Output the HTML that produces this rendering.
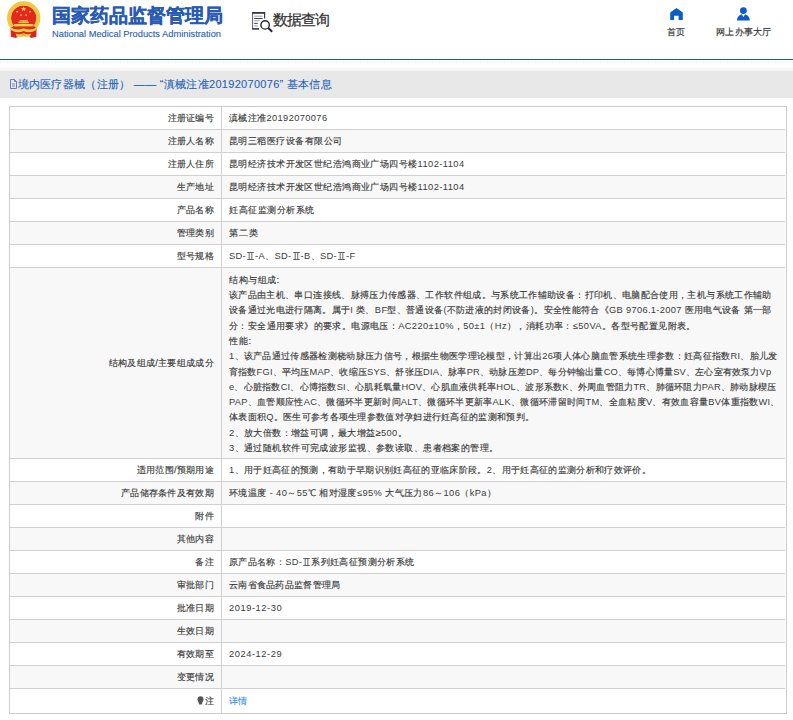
<!DOCTYPE html>
<html><head><meta charset="utf-8">
<style>
html,body{margin:0;padding:0;background:#fff;}
body{width:793px;height:720px;position:relative;overflow:hidden;font-family:"Liberation Sans",sans-serif;color:#444;}
.a{position:absolute;white-space:nowrap;}
#title{left:52px;top:4px;font-size:19px;font-weight:bold;color:#2a5bb3;line-height:24px;-webkit-text-stroke:0.3px #2a5bb3;}
#en{left:52px;top:28.5px;font-size:9.3px;color:#2c5fb4;line-height:11px;-webkit-text-stroke:0.12px #2c5fb4;}
#sq{left:272.5px;top:9.5px;font-size:15px;letter-spacing:-1px;color:#333;line-height:20px;-webkit-text-stroke:0.25px #333;}
.nav{font-size:9.3px;letter-spacing:.3px;color:#333;line-height:12px;-webkit-text-stroke:0.15px #333;}
#bl{left:0;top:59px;width:793px;height:1px;background:#0a5cbf;}
#grad{left:0;top:64px;width:793px;height:7px;background:linear-gradient(#fff 30%,#f2f2f2);}
#band{left:0;top:71px;width:793px;height:27px;background:#e8e8e8;}
#sub{left:10px;top:77px;font-size:11px;letter-spacing:.3px;color:#2462bd;line-height:15px;-webkit-text-stroke:0.1px #2462bd;}
.ln{left:10px;width:775px;height:1px;background:#d1cfd0;}
.t{font-size:9.3px;letter-spacing:0.3px;line-height:15px;color:#3a3a3a;-webkit-text-stroke:0.15px #3a3a3a;}
.lab{right:579px;text-align:right;}
.val{left:229px;}
.lat{-webkit-text-stroke:0;}
.link{color:#3a8ef2;-webkit-text-stroke:0.15px #3a8ef2;}
.big{left:229px;}
.big div{height:15.3px;line-height:15px;}
.bulb{display:inline-block;width:6px;height:8px;background:#555;border-radius:3px 3px 2px 2px;margin-right:2px;vertical-align:-1px;}
</style></head><body>

<svg class="a" style="left:0;top:0" width="48" height="42" viewBox="0 0 48 42">
  <path d="M10.6 26 L10.8 36.8 L16 38 L18.5 36 L28.7 36 L31.2 38 L36.4 36.8 L36.6 26 Z" fill="#d9261c"/>
  <circle cx="23.7" cy="18" r="12.8" fill="#e3291f"/>
  <path d="M12.3 27.1 A14.6 14.6 0 1 1 35.1 27.1" fill="none" stroke="#f3c640" stroke-width="4.1"/>
  <g fill="#f6cf48">
   <polygon points="23.6,6.3 24.4,8.2 26.3,8.2 24.8,9.4 25.4,11.3 23.6,10.1 21.8,11.3 22.4,9.4 20.9,8.2 22.8,8.2"/>
   <circle cx="17.3" cy="11.7" r="0.9"/><circle cx="30" cy="11.7" r="0.9"/>
   <circle cx="21.1" cy="15.1" r="0.9"/><circle cx="26.2" cy="15.1" r="0.9"/>
   <rect x="19.5" y="20.2" width="8.4" height="1.4"/>
   <rect x="18.3" y="21.8" width="10.6" height="1.4"/>
   <rect x="13.9" y="24" width="19.5" height="2.4"/>
   <path d="M10.5 27.5 Q17 31 23.6 28.3 Q30.5 31 36.8 27.5 L36 30.2 Q30 33.8 23.6 31 Q17 33.8 11.3 30.2Z"/>
   <path d="M15.8 33.4 Q19 35 23.6 33.3 Q28 35 30.9 33.4 L30.2 36.6 Q27 37.6 23.6 36.4 Q20 37.6 16.5 36.6Z"/>
  </g>
  <ellipse cx="23.6" cy="35" rx="2.2" ry="1.1" fill="#e9a93a"/>
</svg>
<div class="a" id="title">国家药品监督管理局</div>
<div class="a" id="en">National Medical Products Administration</div>
<svg class="a" style="left:248px;top:8px" width="30" height="28" viewBox="248 8 30 28">
  <path d="M252.6 28.9 V12.9" fill="none" stroke="#5a5a6a" stroke-width="1"/><path d="M264.6 12.9 V18.5" fill="none" stroke="#2a2a3a" stroke-width="1.1"/>
  <path d="M252.1 12.9 H265.2" stroke="#2a2a3a" stroke-width="1.7"/>
  <path d="M252.1 28.9 H259" stroke="#2a2a3a" stroke-width="1.5"/>
  <g stroke-width="1">
   <path d="M254.2 16.2 H262.6" stroke="#9a9aa4"/>
   <path d="M254.2 18.5 H262.6" stroke="#3a3a48"/>
   <path d="M254.2 20.8 H259.5" stroke="#9a9aa4"/>
   <path d="M254.2 23.4 H257.7" stroke="#3a3a48"/>
   <path d="M254.2 25.9 H257.9" stroke="#9a9aa4"/>
  </g>
  <circle cx="265.1" cy="24.9" r="4.2" fill="#fff" stroke="#23233a" stroke-width="1.4"/>
  <path d="M268.3 28.1 L272.2 31.8" stroke="#23233a" stroke-width="2"/>
</svg>
<div class="a" id="sq">数据查询</div>
<svg class="a" style="left:664px;top:4px" width="26" height="20" viewBox="664 4 26 20">
  <path d="M676.5 7.9 L682.8 12.5 V20 H678.6 V15.8 H674.1 V20 H670.2 V12.5 Z" fill="#0b5bc8"/>
</svg>
<div class="a nav" style="left:667px;top:26px">首页</div>
<svg class="a" style="left:730px;top:4px" width="26" height="20" viewBox="730 4 26 20">
  <circle cx="743.4" cy="10.6" r="3.4" fill="#0b5bc8"/>
  <path d="M736.9 20.4 Q737.3 15.6 741.6 14.2 L743.4 17 L745.2 14.2 Q749.5 15.6 749.9 20.4Z" fill="#0b5bc8"/>
</svg>
<div class="a nav" style="left:716px;top:26px">网上办事大厅</div>
<div class="a" id="bl"></div>
<svg class="a" style="left:0;top:61px" width="793" height="2"><defs><pattern id="p" width="3" height="2" patternUnits="userSpaceOnUse"><path d="M0.2 2 L2.2 0" stroke="#e6e6e6" stroke-width="0.9"/></pattern></defs><rect width="793" height="2" fill="url(#p)"/></svg>
<div class="a" id="grad"></div>
<div class="a" id="band"></div>
<div class="a" id="sub"><svg width="7" height="10" viewBox="0 0 7 10" style="vertical-align:-1px;margin-right:0.5px"><path d="M0.5 0.5 H4.5 L6.5 2.5 V9.5 H0.5Z" fill="none" stroke="#5a6fc8" stroke-width="0.9"/><path d="M4.5 0.5V2.5H6.5M2 5H5M2 7H5" fill="none" stroke="#5a6fc8" stroke-width="0.8"/></svg>境内医疗器械（注册） —— “滇械注准20192070076” 基本信息</div>


<div class="a" style="left:9px;top:106px;width:776px;height:606px;border:1px solid #cdcbcc"></div>
<div class="a" style="left:10px;top:107px;width:775px;height:22px;background:#fff"></div>
<div class="a ln" style="top:129px"></div>
<div class="a t lab" style="top:110.50px">注册证编号</div>
<div class="a t val" style="top:110.50px;letter-spacing:0.371px">滇械注准<span class="lat">20192070076</span></div>
<div class="a" style="left:10px;top:130px;width:775px;height:22px;background:#f8f8f8"></div>
<div class="a ln" style="top:152px"></div>
<div class="a t lab" style="top:133.50px">注册人名称</div>
<div class="a t val" style="top:133.50px;letter-spacing:0.455px">昆明三稻医疗设备有限公司</div>
<div class="a" style="left:10px;top:153px;width:775px;height:22px;background:#fff"></div>
<div class="a ln" style="top:175px"></div>
<div class="a t lab" style="top:156.50px">注册人住所</div>
<div class="a t val" style="top:156.50px;letter-spacing:0.429px">昆明经济技术开发区世纪浩鸿商业广场四号楼<span class="lat">1102-1104</span></div>
<div class="a" style="left:10px;top:176px;width:775px;height:22px;background:#f8f8f8"></div>
<div class="a ln" style="top:198px"></div>
<div class="a t lab" style="top:179.50px">生产地址</div>
<div class="a t val" style="top:179.50px;letter-spacing:0.429px">昆明经济技术开发区世纪浩鸿商业广场四号楼<span class="lat">1102-1104</span></div>
<div class="a" style="left:10px;top:199px;width:775px;height:22px;background:#fff"></div>
<div class="a ln" style="top:221px"></div>
<div class="a t lab" style="top:202.50px">产品名称</div>
<div class="a t val" style="top:202.50px;letter-spacing:0.525px">妊高征监测分析系统</div>
<div class="a" style="left:10px;top:222px;width:775px;height:22px;background:#f8f8f8"></div>
<div class="a ln" style="top:244px"></div>
<div class="a t lab" style="top:225.50px">管理类别</div>
<div class="a t val" style="top:225.50px;letter-spacing:0.800px">第二类</div>
<div class="a" style="left:10px;top:245px;width:775px;height:22px;background:#fff"></div>
<div class="a ln" style="top:267px"></div>
<div class="a t lab" style="top:248.50px">型号规格</div>
<div class="a t val" style="top:248.50px;letter-spacing:0.353px"><span class="lat">SD-</span><svg width="9" height="8" viewBox="0 0 9 8" style="vertical-align:-1px"><path d="M1.2 0.5H7.8M1.2 7.5H7.8M3.2 0.5V7.5M5.8 0.5V7.5" stroke="#555" stroke-width="0.9" fill="none"/></svg><span class="lat">-A</span>、<span class="lat">SD-</span><svg width="9" height="8" viewBox="0 0 9 8" style="vertical-align:-1px"><path d="M1.2 0.5H7.8M1.2 7.5H7.8M3.2 0.5V7.5M5.8 0.5V7.5" stroke="#555" stroke-width="0.9" fill="none"/></svg><span class="lat">-B</span>、<span class="lat">SD-</span><svg width="9" height="8" viewBox="0 0 9 8" style="vertical-align:-1px"><path d="M1.2 0.5H7.8M1.2 7.5H7.8M3.2 0.5V7.5M5.8 0.5V7.5" stroke="#555" stroke-width="0.9" fill="none"/></svg><span class="lat">-F</span></div>
<div class="a" style="left:10px;top:268px;width:775px;height:190px;background:#f8f8f8"></div>
<div class="a ln" style="top:458px"></div>
<div class="a t lab" style="top:355.50px">结构及组成/主要组成成分</div>
<div class="a t big" style="top:272.8px"><div style="letter-spacing:0.500px">结构与组成:</div><div style="letter-spacing:0.356px">该产品由主机、串口连接线、脉搏压力传感器、工作软件组成。与系统工作辅助设备：打印机、电脑配合使用，主机与系统工作辅助</div><div style="letter-spacing:0.332px">设备通过光电进行隔离。属于<span class="lat">I</span> 类、<span class="lat">BF</span>型、普通设备<span class="lat">(</span>不防进液的封闭设备<span class="lat">)</span>。安全性能符合《<span class="lat">GB 9706.1-2007</span> 医用电气设备 第一部</div><div style="letter-spacing:0.395px">分：安全通用要求》的要求。电源电压：<span class="lat">AC220±10%</span>，<span class="lat">50±1</span>（<span class="lat">Hz</span>），消耗功率：<span class="lat">≤50VA</span>。各型号配置见附表。</div><div style="letter-spacing:0.800px">性能:</div><div style="letter-spacing:0.327px"><span class="lat">1</span>、该产品通过传感器检测桡动脉压力信号，根据生物医学理论模型，计算出<span class="lat">26</span>项人体心脑血管系统生理参数：妊高征指数<span class="lat">RI</span>、胎儿发</div><div style="letter-spacing:0.195px">育指数<span class="lat">FGI</span>、平均压<span class="lat">MAP</span>、收缩压<span class="lat">SYS</span>、舒张压<span class="lat">DIA</span>、脉率<span class="lat">PR</span>、动脉压差<span class="lat">DP</span>、每分钟输出量<span class="lat">CO</span>、每博心博量<span class="lat">SV</span>、左心室有效泵力<span class="lat">Vp</span></div><div style="letter-spacing:0.242px"><span class="lat">e</span>、心脏指数<span class="lat">CI</span>、心博指数<span class="lat">SI</span>、心肌耗氧量<span class="lat">HOV</span>、心肌血液供耗率<span class="lat">HOL</span>、波形系数<span class="lat">K</span>、外周血管阻力<span class="lat">TR</span>、肺循环阻力<span class="lat">PAR</span>、肺动脉楔压</div><div style="letter-spacing:0.300px"><span class="lat">PAP</span>、血管顺应性<span class="lat">AC</span>、微循环半更新时间<span class="lat">ALT</span>、微循环半更新率<span class="lat">ALK</span>、微循环滞留时间<span class="lat">TM</span>、全血粘度<span class="lat">V</span>、有效血容量<span class="lat">BV</span>体重指数<span class="lat">WI</span>、</div><div style="letter-spacing:0.300px">体表面积<span class="lat">Q</span>。医生可参考各项生理参数值对孕妇进行妊高征的监测和预判。</div><div style="letter-spacing:0.390px"><span class="lat">2</span>、放大倍数：增益可调，最大增益≥<span class="lat">500</span>。</div><div style="letter-spacing:0.429px"><span class="lat">3</span>、通过随机软件可完成波形监视、参数读取、患者档案的管理。</div></div>
<div class="a" style="left:10px;top:459px;width:775px;height:22px;background:#fff"></div>
<div class="a ln" style="top:481px"></div>
<div class="a t lab" style="top:462.50px">适用范围/预期用途</div>
<div class="a t val" style="top:462.50px;letter-spacing:0.342px"><span class="lat">1</span>、用于妊高征的预测，有助于早期识别妊高征的亚临床阶段。<span class="lat">2</span>、用于妊高征的监测分析和疗效评价。</div>
<div class="a" style="left:10px;top:482px;width:775px;height:22px;background:#f8f8f8"></div>
<div class="a ln" style="top:504px"></div>
<div class="a t lab" style="top:485.50px">产品储存条件及有效期</div>
<div class="a t val" style="top:485.50px;letter-spacing:0.408px">环境温度 <span class="lat">- 40</span>～<span class="lat">55</span>℃ 相对湿度<span class="lat">≤95%</span> 大气压力<span class="lat">86</span>～<span class="lat">106</span>（<span class="lat">kPa</span>）</div>
<div class="a" style="left:10px;top:505px;width:775px;height:22px;background:#fff"></div>
<div class="a ln" style="top:527px"></div>
<div class="a t lab" style="top:508.50px">附件</div>
<div class="a" style="left:10px;top:528px;width:775px;height:22px;background:#f8f8f8"></div>
<div class="a ln" style="top:550px"></div>
<div class="a t lab" style="top:531.50px">其他内容</div>
<div class="a" style="left:10px;top:551px;width:775px;height:22px;background:#fff"></div>
<div class="a ln" style="top:573px"></div>
<div class="a t lab" style="top:554.50px">备注</div>
<div class="a t val" style="top:554.50px;letter-spacing:0.365px">原产品名称：<span class="lat">SD-</span><svg width="9" height="8" viewBox="0 0 9 8" style="vertical-align:-1px"><path d="M1.2 0.5H7.8M1.2 7.5H7.8M3.2 0.5V7.5M5.8 0.5V7.5" stroke="#555" stroke-width="0.9" fill="none"/></svg>系列妊高征预测分析系统</div>
<div class="a" style="left:10px;top:574px;width:775px;height:22px;background:#f8f8f8"></div>
<div class="a ln" style="top:596px"></div>
<div class="a t lab" style="top:577.50px">审批部门</div>
<div class="a t val" style="top:577.50px;letter-spacing:0.300px">云南省食品药品监督管理局</div>
<div class="a" style="left:10px;top:597px;width:775px;height:22px;background:#fff"></div>
<div class="a ln" style="top:619px"></div>
<div class="a t lab" style="top:600.50px">批准日期</div>
<div class="a t val" style="top:600.50px;letter-spacing:0.556px"><span class="lat">2019-12-30</span></div>
<div class="a" style="left:10px;top:620px;width:775px;height:22px;background:#f8f8f8"></div>
<div class="a ln" style="top:642px"></div>
<div class="a t lab" style="top:623.50px">生效日期</div>
<div class="a" style="left:10px;top:643px;width:775px;height:22px;background:#fff"></div>
<div class="a ln" style="top:665px"></div>
<div class="a t lab" style="top:646.50px">有效期至</div>
<div class="a t val" style="top:646.50px;letter-spacing:0.556px"><span class="lat">2024-12-29</span></div>
<div class="a" style="left:10px;top:666px;width:775px;height:22px;background:#f8f8f8"></div>
<div class="a ln" style="top:688px"></div>
<div class="a t lab" style="top:669.50px">变更情况</div>
<div class="a" style="left:10px;top:689px;width:775px;height:24px;background:#fff"></div>
<div class="a t lab" style="top:693.50px"><svg width="7" height="9" viewBox="0 0 7 9" style="vertical-align:-1px;margin-right:1px"><circle cx="3.5" cy="3.2" r="3" fill="#555"/><path d="M1.2 5 L2.2 8.5 H4.8 L5.8 5Z" fill="#555"/></svg>注</div>
<div class="a t val link" style="top:693.50px;letter-spacing:0.300px">详情</div>
<div class="a" style="left:221px;top:107px;width:1px;height:606px;background:#d1cfd0"></div>

</body></html>
